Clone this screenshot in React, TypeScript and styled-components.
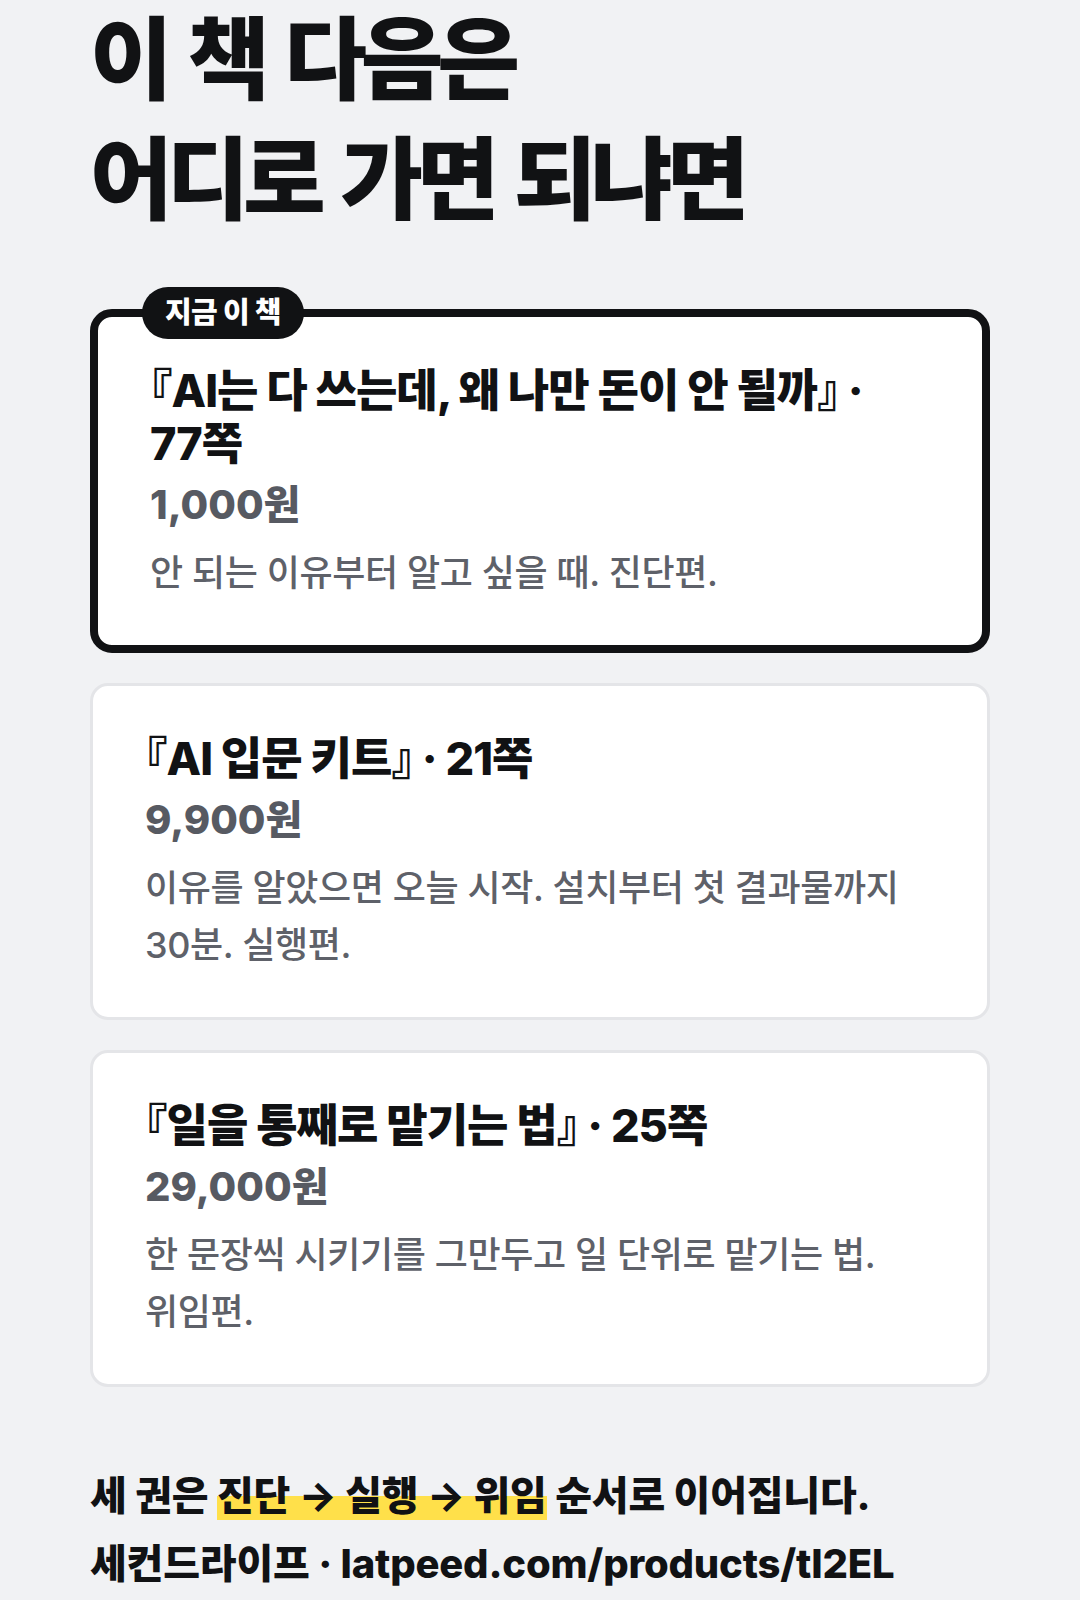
import React from "react";
import styled, { createGlobalStyle } from "styled-components";

/* ─────────────── Types ─────────────── */
interface Book {
  id: string;
  name: string;
  pages: number;
  price: string;
  desc: string;
  current?: boolean;
}

const BOOKS: Book[] = [
  {
    id: "diagnose",
    name: "AI는 다 쓰는데, 왜 나만 돈이 안 될까",
    pages: 77,
    price: "1,000원",
    desc: "안 되는 이유부터 알고 싶을 때. 진단편.",
    current: true,
  },
  {
    id: "run",
    name: "AI 입문 키트",
    pages: 21,
    price: "9,900원",
    desc: "이유를 알았으면 오늘 시작. 설치부터 첫 결과물까지 30분. 실행편.",
  },
  {
    id: "delegate",
    name: "일을 통째로 맡기는 법",
    pages: 25,
    price: "29,000원",
    desc: "한 문장씩 시키기를 그만두고 일 단위로 맡기는 법. 위임편.",
  },
];

/* ─────────────── Styles ─────────────── */
const GlobalStyle = createGlobalStyle`
  html, body {
    margin: 0;
    padding: 0;
    height: 100%;
    background: #f1f2f4;
  }
  body {
    font-family: "Inter", "Noto Sans CJK KR", sans-serif;
    color: #111214;
    word-break: keep-all;
  }
  * { box-sizing: border-box; }
`;

// 스크롤 영역 (원본처럼 세로·가로 스크롤바가 보이도록)
const Viewport = styled.div`
  width: 100vw;
  height: 100vh;
  overflow: auto;
  background: #f1f2f4;

  &::-webkit-scrollbar {
    width: 15px;
    height: 15px;
    background: #f1f1f1;
  }
  &::-webkit-scrollbar-thumb {
    background: #8b8b8b;
    border: 3px solid #f1f1f1;
    border-radius: 8px;
  }
  &::-webkit-scrollbar-corner {
    background: #f1f1f1;
  }
`;

const Page = styled.main`
  width: 1080px;
  padding: 0 90px 44px;
`;

const Headline = styled.h1`
  margin: 0;
  font-size: 90px;
  line-height: 120px;
  font-weight: 900;
  letter-spacing: -0.07em;
  word-spacing: 9px;
  color: #111214;
`;

const CardList = styled.section`
  display: flex;
  flex-direction: column;
  gap: 30px;
  margin-top: 69px;
`;

const Card = styled.article<{ $current?: boolean }>`
  position: relative;
  background: #ffffff;
  border: ${({ $current }) => ($current ? "8px solid #111214" : "3px solid #e4e5e8")};
  border-radius: ${({ $current }) => ($current ? "22px" : "18px")};
  padding: ${({ $current }) => ($current ? "47px 52px 42px" : "46px 52px 42px")};
`;

const Badge = styled.span`
  position: absolute;
  top: -30px;
  left: 44px;
  height: 52px;
  padding: 0 23px;
  border-radius: 999px;
  background: #111214;
  color: #ffffff;
  font-size: 29px;
  line-height: 52px;
  font-weight: 800;
  letter-spacing: -0.02em;
  white-space: nowrap;
`;

const Title = styled.h2`
  margin: 0;
  font-size: 45px;
  line-height: 53px;
  font-weight: 800;
  letter-spacing: -0.022em;
  color: #111214;
`;

const Bracket = styled.span`
  font-feature-settings: "halt";
`;

const Price = styled.div`
  margin-top: 11px;
  font-size: 40px;
  line-height: 48px;
  font-weight: 800;
  color: #575a62;
`;

const Desc = styled.p`
  margin: 16px 0 0;
  font-size: 36px;
  line-height: 57.6px;
  font-weight: 500;
  letter-spacing: -0.01em;
  color: #5e6169;
`;

const Footer = styled.footer`
  margin-top: 75px;
`;

const Line = styled.p`
  margin: 0;
  font-size: 40px;
  line-height: 68px;
  font-weight: 800;
  letter-spacing: -0.005em;
  color: #111214;
`;

const Mark = styled.span`
  background: linear-gradient(transparent 52%, #ffe04a 52%);
`;

/* ─────────────── Component ─────────────── */
const App: React.FC = () => {
  return (
    <>
      <GlobalStyle />
      <Viewport>
        <Page>
          <Headline>
            이 책 다음은
            <br />
            어디로 가면 되냐면
          </Headline>

          <CardList>
            {BOOKS.map((b) => (
              <Card key={b.id} $current={b.current}>
                {b.current && <Badge>지금 이 책</Badge>}
                <Title>
                  <Bracket>『</Bracket>
                  {b.name}
                  <Bracket>』</Bracket> · {b.pages}쪽
                </Title>
                <Price>{b.price}</Price>
                <Desc>{b.desc}</Desc>
              </Card>
            ))}
          </CardList>

          <Footer>
            <Line>
              세 권은 <Mark>진단 → 실행 → 위임</Mark> 순서로 이어집니다.
            </Line>
            <Line>세컨드라이프 · latpeed.com/products/tI2EL</Line>
          </Footer>
        </Page>
      </Viewport>
    </>
  );
};

export default App;
